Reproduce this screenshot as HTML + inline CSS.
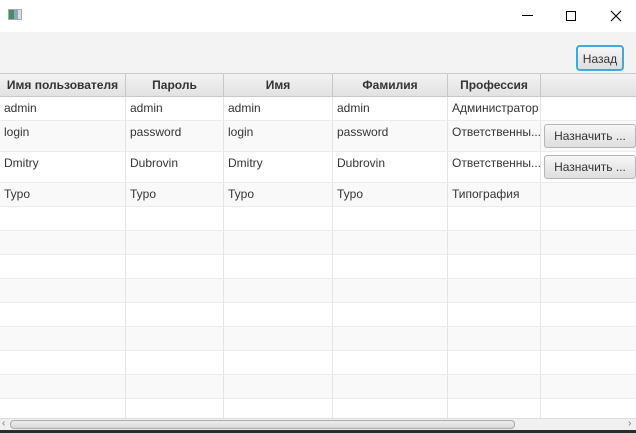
<!DOCTYPE html>
<html><head><meta charset="utf-8"><style>
*{box-sizing:border-box;margin:0;padding:0}
body{width:636px;height:433px;overflow:hidden;background:#fff;font-family:"Liberation Sans","Noto Sans CJK SC",sans-serif;font-size:12px;color:#333;position:relative}
.abs{position:absolute}
.title{left:0;top:0;width:636px;height:32px;background:#fff}
.bar{left:0;top:32px;width:636px;height:41px;background:#f3f3f3}
.hdr{top:73px;height:24px;background:linear-gradient(#f3f3f3,#e2e2e2);border-top:1px solid #c8c8c8;border-bottom:1px solid #c8c8c8;border-right:1px solid #c8c8c8;font-weight:bold;text-align:center;line-height:22px;font-size:12px;color:#333}
.row{left:0;width:636px;border-bottom:1px solid #ececec}
.cell{top:0;height:100%;border-right:1px solid #e4e4e4;padding-left:4px;line-height:22px}
.btn{border:1px solid #b5b5b5;border-radius:3px;background:linear-gradient(#f6f6f6,#dedede);text-align:center;color:#333}
</style></head><body>
<div class="abs title"></div>
<div class="abs" style="left:8px;top:9px;width:14px;height:11px;border:1px solid #aaa;background:linear-gradient(90deg,#4a8a6a 0 40%,#8ab 40% 75%,#ddd 75%)"></div>
<div class="abs" style="left:522px;top:15px;width:11px;height:1px;background:#000"></div>
<div class="abs" style="left:566px;top:11px;width:10px;height:10px;border:1px solid #000"></div>
<svg class="abs" style="left:610px;top:10px" width="12" height="12"><path d="M1 1L11 11M11 1L1 11" stroke="#000" stroke-width="1.1"/></svg>
<div class="abs bar"></div>
<div class="abs btn" style="left:576px;top:45px;width:48px;height:26px;line-height:24px;border:2px solid #3fa9dc;border-radius:4px">Назад</div>

<div class="abs hdr" style="left:0;width:126px">Имя пользователя</div>
<div class="abs hdr" style="left:126px;width:98px">Пароль</div>
<div class="abs hdr" style="left:224px;width:109px">Имя</div>
<div class="abs hdr" style="left:333px;width:115px">Фамилия</div>
<div class="abs hdr" style="left:448px;width:93px">Профессия</div>
<div class="abs hdr" style="left:541px;width:95px;border-right:none"></div>

<div id="rows"></div>
<script>
var rows=[[97,24,"#fff",["admin","admin","admin","admin","Администратор"],0],
[121,31,"#f9f9f9",["login","password","login","password","Ответственны..."],1],
[152,31,"#fff",["Dmitry","Dubrovin","Dmitry","Dubrovin","Ответственны..."],1],
[183,24,"#f9f9f9",["Typo","Typo","Typo","Typo","Типография"],0]];
var y=207,i=0;while(y<418){rows.push([y,24,i%2?"#f9f9f9":"#fff",["","","","",""],0]);y+=24;i++;}
var xs=[0,126,224,333,448,541,636];var h="";
rows.forEach(function(r){h+='<div class="abs row" style="top:'+r[0]+'px;height:'+r[1]+'px;background:'+r[2]+'">';
for(var c=0;c<6;c++){h+='<div class="abs cell" style="left:'+xs[c]+'px;width:'+(xs[c+1]-xs[c])+'px;'+(c==5?'border-right:none':'')+'">'+(c<5?r[3][c]:'')+'</div>';}
if(r[4])h+='<div class="abs btn" style="left:544px;top:3px;width:92px;height:24px;line-height:22px">Назначить ...</div>';
h+='</div>';});
document.getElementById('rows').innerHTML=h;
</script>
<div class="abs" style="left:0;top:418px;width:636px;height:12px;background:#f0f0f0;border-top:1px solid #ddd"></div>
<div class="abs" style="left:10px;top:420px;width:505px;height:9px;border:1px solid #aaa;border-radius:4px;background:linear-gradient(#eee,#d8d8d8);width:505px"></div>
<div class="abs" style="left:2px;top:418px;font-size:10px;color:#777">‹</div>
<div class="abs" style="left:628px;top:418px;font-size:10px;color:#777">›</div>
<div class="abs" style="left:0;top:430px;width:636px;height:3px;background:#2b2b2b"></div>
</body></html>
